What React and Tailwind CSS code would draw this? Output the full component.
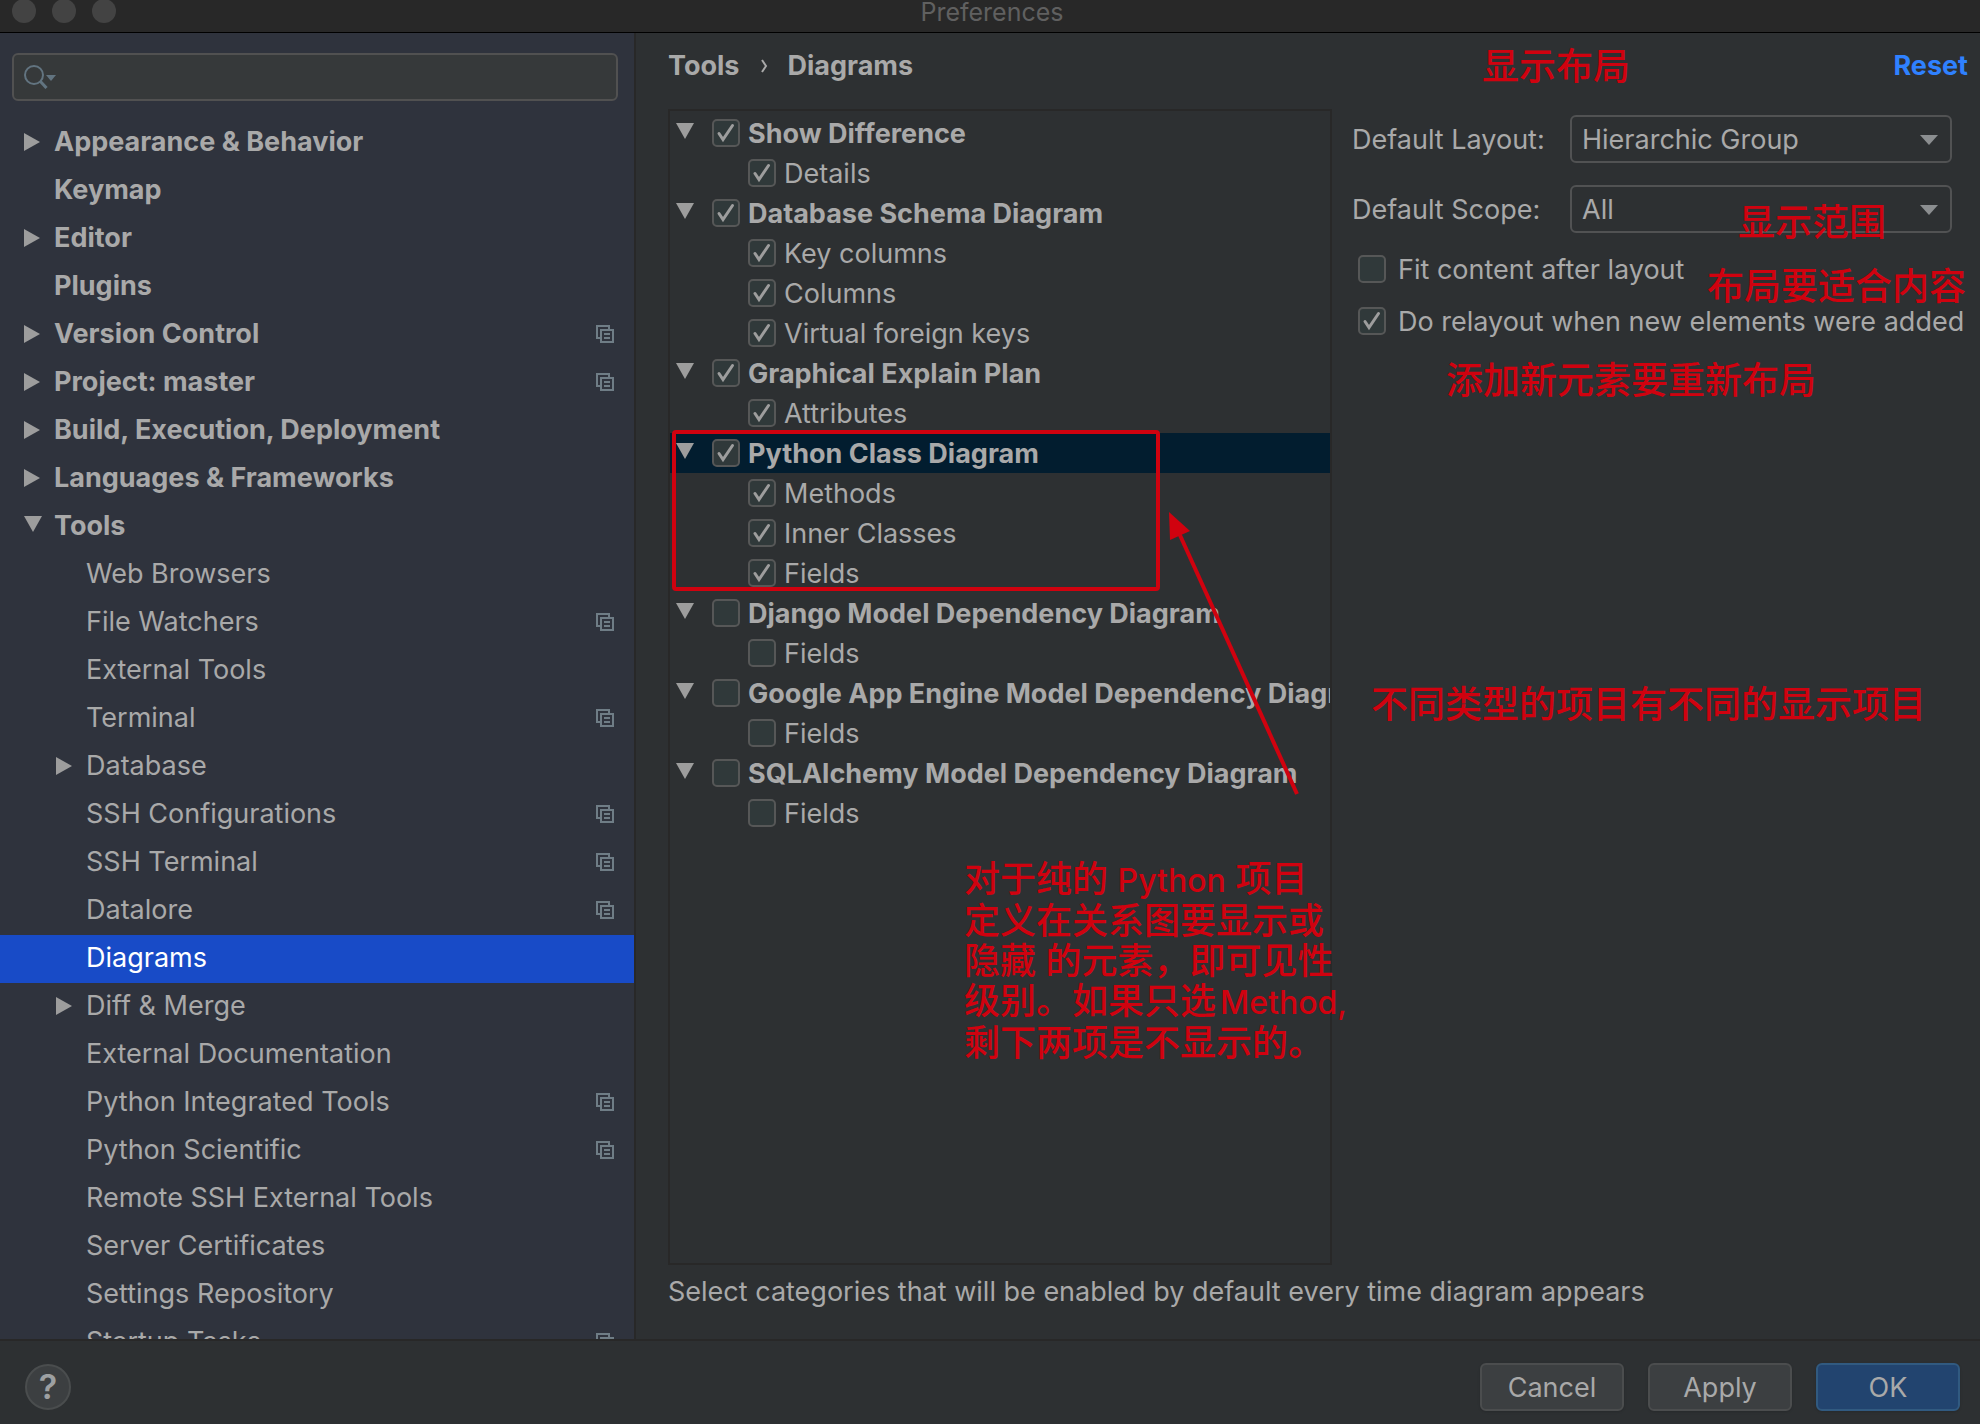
import { useState } from 'react';
import clsx from 'clsx';

const NAV_ITEMS = [
  { label: 'Appearance & Behavior', level: 0, arrow: 'right' },
  { label: 'Keymap', level: 0 },
  { label: 'Editor', level: 0, arrow: 'right' },
  { label: 'Plugins', level: 0 },
  { label: 'Version Control', level: 0, arrow: 'right', project: true },
  { label: 'Project: master', level: 0, arrow: 'right', project: true },
  { label: 'Build, Execution, Deployment', level: 0, arrow: 'right' },
  { label: 'Languages & Frameworks', level: 0, arrow: 'right' },
  { label: 'Tools', level: 0, arrow: 'down' },
  { label: 'Web Browsers', level: 1 },
  { label: 'File Watchers', level: 1, project: true },
  { label: 'External Tools', level: 1 },
  { label: 'Terminal', level: 1, project: true },
  { label: 'Database', level: 1, arrow: 'right' },
  { label: 'SSH Configurations', level: 1, project: true },
  { label: 'SSH Terminal', level: 1, project: true },
  { label: 'Datalore', level: 1, project: true },
  { label: 'Diagrams', level: 1 },
  { label: 'Diff & Merge', level: 1, arrow: 'right' },
  { label: 'External Documentation', level: 1 },
  { label: 'Python Integrated Tools', level: 1, project: true },
  { label: 'Python Scientific', level: 1, project: true },
  { label: 'Remote SSH External Tools', level: 1 },
  { label: 'Server Certificates', level: 1 },
  { label: 'Settings Repository', level: 1 },
  { label: 'Startup Tasks', level: 1, project: true },
];

const DIAGRAM_GROUPS = [
  { label: 'Show Difference', checked: true, items: ['Details'] },
  { label: 'Database Schema Diagram', checked: true, items: ['Key columns', 'Columns', 'Virtual foreign keys'] },
  { label: 'Graphical Explain Plan', checked: true, items: ['Attributes'] },
  { label: 'Python Class Diagram', checked: true, active: true, items: ['Methods', 'Inner Classes', 'Fields'] },
  { label: 'Django Model Dependency Diagram', checked: false, items: ['Fields'] },
  { label: 'Google App Engine Model Dependency Diagram', checked: false, items: ['Fields'] },
  { label: 'SQLAlchemy Model Dependency Diagram', checked: false, items: ['Fields'] },
];

function Arrow({ dir }) {
  if (dir === 'right') {
    return (
      <svg className="w-[18px] h-[18px]" viewBox="0 0 18 18" fill="#9d9d9d">
        <path d="M0 0L16 9L0 18Z" />
      </svg>
    );
  }
  return (
    <svg className="w-[18px] h-5" viewBox="0 0 18 20" fill="#9d9d9d">
      <path d="M0 0H18L9 16Z" />
    </svg>
  );
}

function ProjectIcon() {
  return (
    <svg className="w-[18px] h-[18px]" viewBox="0 0 18 18" fill="none" stroke="#6f7d86" strokeWidth="2">
      <path d="M4 13H1V1H13V4" />
      <path d="M5 5H17V17H5Z" />
      <path d="M8 9H14M8 13H14" />
    </svg>
  );
}

function CheckBox({ label, checked, bold, wide }) {
  return (
    <label className={clsx('flex items-center whitespace-nowrap', wide ? 'gap-3' : 'gap-2', bold && 'font-bold')}>
      <span className="relative block w-7 h-7 shrink-0">
        <input
          type="checkbox"
          defaultChecked={checked}
          className="peer block appearance-none w-7 h-7 rounded-[5px] border-2 border-[#565757] bg-[#30393a]"
        />
        <svg
          className="absolute inset-0 w-7 h-7 pointer-events-none opacity-0 peer-checked:opacity-100"
          viewBox="0 0 28 28"
          fill="none"
          stroke="#9d9d9d"
          strokeWidth="3"
          strokeLinecap="round"
        >
          <path d="M7 14.5L11 20.5L20.5 6.5" />
        </svg>
      </span>
      <span className="h-8 leading-[34px]">{label}</span>
    </label>
  );
}

function SelectRow({ id, label, options }) {
  return (
    <div className="flex items-center">
      <label htmlFor={id} className="w-[218px] h-8 leading-[34px] shrink-0">
        {label}
      </label>
      <div className="relative flex-1">
        <select
          id={id}
          className="appearance-none w-full h-12 pt-[2px] pl-[10px] pr-12 rounded-md border-2 border-[#515253] bg-[#2d3032]"
        >
          {options.map((o) => (
            <option key={o}>{o}</option>
          ))}
        </select>
        <svg className="absolute right-[14px] top-5 w-[18px] h-[10px] pointer-events-none" viewBox="0 0 18 10" fill="#8b8e90">
          <path d="M0 0H18L9 10Z" />
        </svg>
      </div>
    </div>
  );
}

function Sidebar() {
  const [selected, setSelected] = useState('Diagrams');

  return (
    <aside className="w-[636px] shrink-0 flex flex-col min-h-0 overflow-hidden bg-[#2f333d] border-r-2 border-[#282828]">
      <div className="relative ml-3 mr-4 mt-5 mb-[18px]">
        <input
          type="text"
          aria-label="Search"
          className="block w-full h-12 pl-14 rounded-md border-2 border-[#515151] bg-[#36393a] outline-none"
        />
        <svg className="absolute left-3 top-3 w-8 h-6 pointer-events-none" viewBox="0 0 32 24" fill="none" stroke="#627480" strokeWidth="2">
          <circle cx="10" cy="10" r="9" />
          <path d="M16 16L22.5 23" strokeWidth="3" />
          <path d="M22 10H32L27 16Z" fill="#627480" stroke="none" />
        </svg>
      </div>
      <nav className="flex-1 min-h-0 overflow-hidden">
        {NAV_ITEMS.map((item) => {
          const isSelected = item.label === selected;
          return (
            <button
              key={item.label}
              type="button"
              onClick={() => setSelected(item.label)}
              className={clsx(
                'flex items-center w-full h-12 pr-5 pb-[2px] text-left',
                item.level === 0 ? 'pl-6 font-bold' : 'pl-14',
                isSelected && 'bg-[#184bc7] text-white',
              )}
            >
              <span className="w-[30px] shrink-0">{item.arrow && <Arrow dir={item.arrow} />}</span>
              <span className="flex-1">{item.label}</span>
              {item.project && <ProjectIcon />}
            </button>
          );
        })}
      </nav>
    </aside>
  );
}

function DiagramTree() {
  return (
    <div className="relative flex-1 min-w-0 border-2 border-[#282828] py-[2px]">
      <ul className="overflow-hidden">
        {DIAGRAM_GROUPS.map((group) => (
          <li key={group.label}>
            <div className={clsx('flex items-center h-10 pl-[6px]', group.active && 'bg-[#021d2f]')}>
              <span className="w-9 shrink-0">
                <Arrow dir="down" />
              </span>
              <CheckBox label={group.label} checked={group.checked} bold />
            </div>
            <ul>
              {group.items.map((item) => (
                <li key={item} className="flex items-center h-10 pl-[78px]">
                  <CheckBox label={item} checked={group.checked} />
                </li>
              ))}
            </ul>
          </li>
        ))}
      </ul>

      {/* hand-drawn marks over the tree */}
      <div className="absolute left-[2px] top-[319px] w-[488px] h-[161px] border-4 border-[#d0020f] rounded-sm pointer-events-none" />
      <svg className="absolute left-[498px] top-[400px] w-[134px] h-[286px] pointer-events-none" viewBox="0 0 134 286">
        <path d="M11 22L129 283" stroke="#d0020f" strokeWidth="4" />
        <path d="M1 1L22 20L2 29Z" fill="#d0020f" />
      </svg>
      <p className="absolute left-[294px] top-[748px] text-4xl leading-10 font-medium whitespace-nowrap text-[#d0020f] pointer-events-none">
        对于纯的 <span className="text-[32px]">Python</span> 项目
        <br />
        定义在关系图要显示或
        <br />
        隐藏 的元素，即可见性
        <br />
        级别。如果只选<span className="pl-1 text-[32px]">Method,</span>
        <br />
        剩下两项是不显示的。
      </p>
    </div>
  );
}

function Note({ className, children }) {
  return (
    <p
      className={clsx(
        'absolute text-[37px] leading-10 font-medium whitespace-nowrap text-[#d0020f] pointer-events-none',
        className,
      )}
    >
      {children}
    </p>
  );
}

export default function App() {
  return (
    <div className="flex flex-col h-screen overflow-hidden bg-[#2d3032] text-[#a9a9a9] text-[27px] leading-8 font-[Inter,'Noto_Sans_CJK_SC',sans-serif]">
      <header className="relative h-[33px] shrink-0 bg-[#282828] border-b border-black text-center">
        <div className="absolute left-3 -top-px flex gap-4">
          <span className="w-6 h-6 rounded-full bg-[#434343]" />
          <span className="w-6 h-6 rounded-full bg-[#434343]" />
          <span className="w-6 h-6 rounded-full bg-[#434343]" />
        </div>
        <h1 className="pl-1 text-[25px] leading-6 text-[#606060]">Preferences</h1>
      </header>

      <div className="flex flex-1 min-h-0">
        <Sidebar />
        <main className="relative flex-1 min-w-0 flex flex-col pl-8">
          <div className="flex items-center h-[76px] pb-[10px] pr-3 font-bold">
            <a href="#tools">Tools</a>
            <svg className="w-2 h-4 ml-[22px] mr-[18px]" viewBox="0 0 8 16" fill="none" stroke="#a9a9a9" strokeWidth="2">
              <path d="M1 2L5 8L1 14" />
            </svg>
            <span>Diagrams</span>
            <a href="#reset" className="ml-auto text-[#2f81ff]">
              Reset
            </a>
          </div>

          <div className="flex flex-1 min-h-0">
            <DiagramTree />
            <div className="w-[600px] shrink-0 ml-5 mr-7 pt-[6px]">
              <div className="flex flex-col gap-[22px]">
                <SelectRow id="layout" label="Default Layout:" options={['Hierarchic Group', 'Organic', 'Circular']} />
                <SelectRow id="scope" label="Default Scope:" options={['All', 'Production', 'Tests']} />
              </div>
              <div className="flex flex-col gap-5 mt-5 pl-[6px]">
                <CheckBox label="Fit content after layout" checked={false} wide />
                <CheckBox label="Do relayout when new elements were added" checked wide />
              </div>
            </div>
          </div>

          <p className="h-[74px] pt-[11px] whitespace-nowrap">
            Select categories that will be enabled by default every time diagram appears
          </p>

          <Note className="right-[350px] top-[14px]">显示布局</Note>
          <Note className="right-[94px] top-[170px]">显示范围</Note>
          <Note className="right-[14px] top-[234px]">布局要适合内容</Note>
          <Note className="right-[164px] top-[328px]">添加新元素要重新布局</Note>
          <Note className="right-[54px] top-[652px]">不同类型的项目有不同的显示项目</Note>
        </main>
      </div>

      <footer className="flex items-center gap-6 h-[85px] shrink-0 pl-[25px] pr-5 pt-[9px] border-t-2 border-[#282828]">
        <button
          type="button"
          aria-label="Help"
          className="w-[46px] h-[46px] mr-auto rounded-full border-2 border-[#4a4d4e] bg-[#3c3f41] text-[34px] font-semibold text-[#9da0a2]"
        >
          ?
        </button>
        <button type="button" className="w-36 h-12 pt-[2px] rounded-md border-2 border-[#4b4d4e] bg-[#3c3f41] shadow-sm">
          Cancel
        </button>
        <button type="button" className="w-36 h-12 pt-[2px] rounded-md border-2 border-[#4b4d4e] bg-[#3c3f41] shadow-sm">
          Apply
        </button>
        <button type="button" className="w-36 h-12 pt-[2px] rounded-md border-2 border-[#315a80] bg-[#22446f] shadow-sm">
          OK
        </button>
      </footer>
    </div>
  );
}
